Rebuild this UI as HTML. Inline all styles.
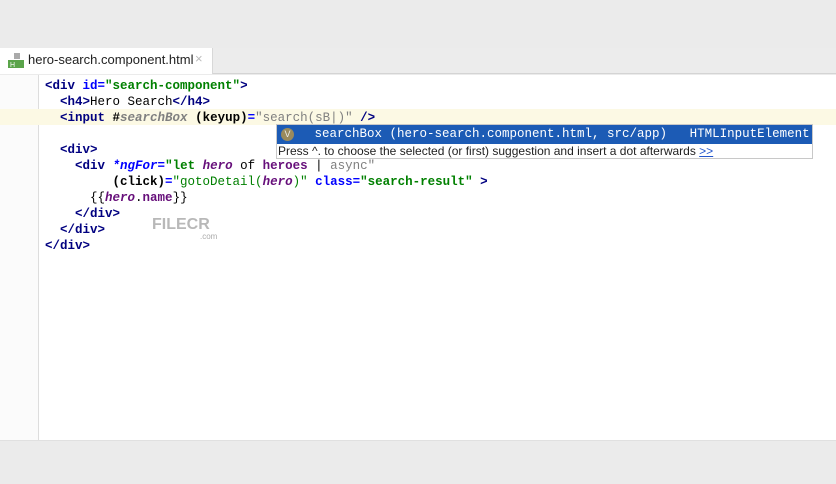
<!DOCTYPE html>
<html><head><meta charset="utf-8"><style>
body{margin:0;width:836px;height:484px;background:#ebebeb;position:relative;overflow:hidden;font-family:"Liberation Sans",sans-serif}
.tabbar{position:absolute;top:48px;left:0;width:836px;height:25px;background:#ececec;border-bottom:1px solid #d4d4d4}
.tab{position:absolute;left:0;top:0;width:212px;height:26px;background:#fff;border-right:1px solid #d8d8d8}
.tab span{position:absolute;left:28px;top:4px;font-size:13px;color:#222}
.tab .x{left:195px;color:#bbb;top:3px}
.ed{position:absolute;top:75px;left:0;width:836px;height:365px;background:#fff;border-bottom:1px solid #e0e0e0}
.gut{position:absolute;left:0;top:0;width:38px;height:365px;background:#fbfbfb;border-right:1px solid #ddd}
.hl{position:absolute;left:0;top:34px;width:836px;height:16px;background:#fcf9e4}
.code{position:absolute;left:45px;top:3px;font-family:"Liberation Mono",monospace;font-size:12.5px;line-height:16px;white-space:pre;color:#000}
.t{color:#000080;font-weight:bold}.a{color:#0000ff;font-weight:bold}.s{color:#008000;font-weight:bold}
.i{color:#660e7a;font-style:italic;font-weight:bold}.g{color:#808080}.k{color:#000;font-weight:bold}
.pop{position:absolute;left:276px;top:124px;width:537px;height:35px;background:#fff;border:1px solid #c8c8c8;box-sizing:border-box}
.r1{height:19px;background:#1c5bb5;color:#fff;font-family:"Liberation Mono",monospace;font-size:12.5px;line-height:19px;position:relative;white-space:pre}
.r2{font-size:12px;line-height:15px;color:#222;padding-left:1px;white-space:pre}
.v{position:absolute;left:4px;top:3px;width:13px;height:13px;border-radius:50%;background:#9a8a5c;color:#eee;font-size:9px;line-height:13px;text-align:center;font-family:"Liberation Sans",sans-serif}
</style></head><body>
<div class="tabbar"><div class="tab">
<svg style="position:absolute;left:8px;top:5px" width="16" height="16"><rect x="6" y="0" width="6" height="6" fill="#aaa"/><rect x="0" y="7" width="16" height="8" fill="#5aa44a"/><text x="2" y="14" font-size="7" fill="#fff" font-family="Liberation Sans">H</text></svg>
<span>hero-search.component.html</span><span class="x">×</span></div></div>
<div class="ed"><div class="gut"></div><div class="hl"></div>
<div class="code"><span class="t">&lt;div </span><span class="a">id=</span><span class="s">"search-component"</span><span class="t">&gt;</span>
  <span class="t">&lt;h4&gt;</span>Hero Search<span class="t">&lt;/h4&gt;</span>
  <span class="t">&lt;input </span><span class="k">#</span><span class="i" style="color:#808080">searchBox</span> <span class="k">(keyup)</span><span class="a">=</span><span class="g">"search(sB|)"</span> <span class="t">/&gt;</span>

  <span class="t">&lt;div&gt;</span>
    <span class="t">&lt;div </span><span class="i" style="color:#0000ff">*ngFor</span><span class="a">=</span><span class="s">"let </span><span class="i">hero</span> of <span class="i" style="font-style:normal">heroes</span> | <span class="g">async"</span>
         <span class="k">(click)</span><span class="a">=</span><span class="s" style="font-weight:normal">"gotoDetail(</span><span class="i">hero</span><span class="s" style="font-weight:normal">)"</span> <span class="a">class=</span><span class="s">"search-result"</span> <span class="t">&gt;</span>
      {{<span class="i">hero</span>.<span class="i" style="font-style:normal">name</span>}}
    <span class="t">&lt;/div&gt;</span>
  <span class="t">&lt;/div&gt;</span>
<span class="t">&lt;/div&gt;</span></div>
<div style="position:absolute;left:152px;top:141px;color:#b8b8b8;font-weight:bold;font-size:16px">FILECR</div>
<div style="position:absolute;left:200px;top:157px;color:#aaa;font-size:8px">.com</div>
</div>
<div class="pop"><div class="r1"><span class="v">V</span>     searchBox (hero-search.component.html, src/app)   HTMLInputElement</div>
<div class="r2">Press ^. to choose the selected (or first) suggestion and insert a dot afterwards <u style="color:#2255cc">&gt;&gt;</u></div></div>
</body></html>
